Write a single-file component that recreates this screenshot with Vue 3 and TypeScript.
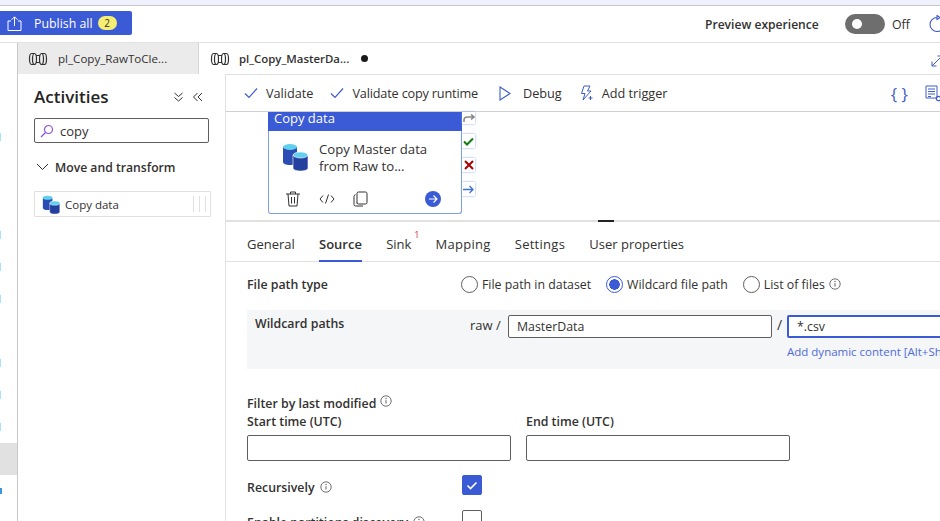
<template>
  <div class="app">
    <!-- shared icons -->
    <svg class="defs" width="0" height="0">
      <defs>
        <symbol id="pipe" viewBox="0 0 20 14">
          <path d="M3.500 1.500h3c1.200 0 2 2.400 2 5.500s-.8 5.500-2 5.500h-3c-1.200 0-2-2.400-2-5.500s.8-5.500 2-5.500zM6.500 1.500c-1.200 0-2 2.400-2 5.500s.8 5.500 2 5.500M8.200 3.500h3.600M8.200 10.500h3.600M13.500 1.500h3c1.200 0 2 2.400 2 5.500s-.8 5.500-2 5.500h-3c-1.200 0-2-2.400-2-5.500s.8-5.500 2-5.500z" fill="none" stroke="#323130" stroke-width="1.200" />
          <path d="M13.500 1.500c1.200 0 2 2.400 2 5.500s-.8 5.500-2 5.500" fill="none" stroke="#323130" stroke-width="1.200" />
        </symbol>
        <symbol id="db" viewBox="0 0 26 28">
          <path d="M1 4v15c0 1.700 3 3 7 3s7-1.300 7-3V4z" fill="#2b4cb3" />
          <ellipse cx="8" cy="4" rx="7" ry="3" fill="#5fd0ee" />
          <path d="M11 12v13c0 1.700 3.200 3 7.500 3s7.500-1.300 7.500-3V12z" fill="#24409f" stroke="#fff" stroke-width=".6" />
          <ellipse cx="18.500" cy="12" rx="7.300" ry="3" fill="#5fd0ee" stroke="#fff" stroke-width=".6" />
        </symbol>
        <symbol id="info" viewBox="0 0 12 12">
          <circle cx="6" cy="6" r="5.200" fill="none" stroke="#605e5c" stroke-width=".9" />
          <path d="M6 5.200v3.300" stroke="#605e5c" stroke-width="1" />
          <circle cx="6" cy="3.500" r=".7" fill="#605e5c" />
        </symbol>
        <symbol id="tick" viewBox="0 0 14 12">
          <path d="M1 6.500l4 4 8-9" fill="none" stroke="#3f5cc8" stroke-width="1.200" />
        </symbol>
      </defs>
    </svg>

    <div class="strip"></div>

    <header class="topbar">
      <button class="publish">
        <svg class="publish-icon" width="15" height="15" viewBox="0 0 15 15">
          <path d="M4 5H1v9.500h13V5h-3M7.500 10V1M4.500 3.800l3-3 3 3" fill="none" stroke="#fff" stroke-width="1" />
        </svg>
        <span>Publish all</span>
        <span class="badge">2</span>
      </button>
      <div class="preview">
        <span class="preview-label">Preview experience</span>
        <span class="toggle"><i></i></span>
        <span class="toggle-state">Off</span>
        <svg class="refresh" width="18" height="18" viewBox="0 0 18 18">
          <path d="M9 2.500A7 7 0 1 0 16 9.500M9 .5v4l3-2z" fill="none" stroke="#3f5cc8" stroke-width="1.100" />
        </svg>
      </div>
    </header>

    <div class="body">
      <nav class="rail">
        <div
          v-for="(slot, index) in railSlots"
          :key="index"
          class="rail-slot"
          :class="{ selected: slot === 'selected', spacer: slot === 'spacer' }"
        >
          <i v-if="slot === 'mark' || slot === 'strong'" class="rail-mark" :class="{ strong: slot === 'strong' }"></i>
        </div>
      </nav>

      <div class="main">
        <div class="tabs">
          <div class="tab">
            <svg width="20" height="14"><use href="#pipe" /></svg>
            <span>pl_Copy_RawToCle...</span>
          </div>
          <div class="tab active">
            <svg width="20" height="14"><use href="#pipe" /></svg>
            <span class="tab-name">pl_Copy_MasterDa...</span>
            <i class="dirty"></i>
          </div>
          <svg class="expand" width="12" height="12" viewBox="0 0 12 12">
            <path d="M1 11L11 1M1 6.500V11h4.500M6.500 1H11v4.500" fill="none" stroke="#3f5cc8" stroke-width="1" />
          </svg>
        </div>

        <div class="below">
          <aside class="activities">
            <div class="act-head">
              <h2>Activities</h2>
              <svg width="11" height="10" viewBox="0 0 11 10">
                <path d="M1.500 1l4 3.500 4-3.500M1.500 5.500l4 3.500 4-3.500" fill="none" stroke="#323130" stroke-width="1" />
              </svg>
              <svg width="11" height="10" viewBox="0 0 11 10">
                <path d="M5.500 1L1.500 5l4 4M10 1L6 5l4 4" fill="none" stroke="#323130" stroke-width="1" />
              </svg>
            </div>
            <div class="search">
              <svg width="14" height="14" viewBox="0 0 14 14">
                <circle cx="8.500" cy="5.500" r="4" fill="none" stroke="#8a4fe0" stroke-width="1.200" />
                <path d="M5.500 8.500L1 13" stroke="#8a4fe0" stroke-width="1.200" />
              </svg>
              <span>copy</span>
            </div>
            <div class="group">
              <svg width="13" height="8" viewBox="0 0 13 8">
                <path d="M1 1l5.500 5.500L12 1" fill="none" stroke="#323130" stroke-width="1" />
              </svg>
              <span>Move and transform</span>
            </div>
            <div class="act-item">
              <svg width="18" height="19"><use href="#db" /></svg>
              <span>Copy data</span>
              <i class="grip"></i>
            </div>
          </aside>

          <section class="workspace">
            <div class="commands">
              <div class="cmd">
                <svg width="14" height="12"><use href="#tick" /></svg>
                <span>Validate</span>
              </div>
              <div class="cmd">
                <svg width="14" height="12"><use href="#tick" /></svg>
                <span class="tight">Validate copy runtime</span>
              </div>
              <div class="cmd debug">
                <svg width="12" height="15" viewBox="0 0 12 15">
                  <path d="M1 1l10 6.500L1 14z" fill="none" stroke="#3f5cc8" stroke-width="1.100" />
                </svg>
                <span>Debug</span>
              </div>
              <div class="cmd">
                <svg width="15" height="16" viewBox="0 0 15 16">
                  <path d="M5 1h6L8.500 6H12l-8 9 2-6.500H2.500zM11.500 11v4M9.500 13h4" fill="none" stroke="#3f5cc8" stroke-width="1" />
                </svg>
                <span>Add trigger</span>
              </div>
              <div class="cmd-right">
                <span class="braces">{ }</span>
                <svg width="17" height="17" viewBox="0 0 17 17">
                  <path d="M1 1h11v12H1zM3 4h7M3 6.500h7M3 9h7M3 11.500h3" fill="none" stroke="#3f5cc8" stroke-width="1" />
                  <circle cx="13.500" cy="13.500" r="2.200" fill="none" stroke="#3f5cc8" stroke-width="1.200" />
                </svg>
              </div>
            </div>

            <div class="canvas">
              <div class="card">
                <div class="card-title">Copy data</div>
                <div class="card-body">
                  <svg width="26" height="28"><use href="#db" /></svg>
                  <p>Copy Master data<br />from Raw to...</p>
                </div>
                <div class="card-actions">
                  <svg width="16" height="16" viewBox="0 0 16 16">
                    <path d="M1 3h14M5.500 3V1h5v2M3 3l1 12h8l1-12M6.500 6v6.500M9.500 6v6.500" fill="none" stroke="#323130" stroke-width="1" />
                  </svg>
                  <svg width="16" height="10" viewBox="0 0 16 10">
                    <path d="M4 1.500L1 5l3 3.500M12 1.500L15 5l-3 3.500M9.500 .5L6.500 9.500" fill="none" stroke="#323130" stroke-width="1" />
                  </svg>
                  <svg width="15" height="16" viewBox="0 0 15 16">
                    <path d="M4 12.500V2.500q0-1.500 1.500-1.500h7q1.500 0 1.500 1.500v9q0 1.500-1.500 1.500h-7Q4 13 4 11.500M2.500 3.500Q1 4 1 5.500v8q0 1.500 1.500 1.500H10" fill="none" stroke="#323130" stroke-width="1" />
                  </svg>
                  <span class="go">
                    <svg width="10" height="10" viewBox="0 0 10 10">
                      <path d="M1 5h8M5.500 1.500L9 5 5.500 8.500" fill="none" stroke="#fff" stroke-width="1.200" />
                    </svg>
                  </span>
                </div>
              </div>
              <div class="ports">
                <span class="port skip">
                  <svg width="12" height="9" viewBox="0 0 12 9">
                    <path d="M1 8V6q0-3 3.500-3H11M8 .5L11 3 8 5.500" fill="none" stroke="#8a8886" stroke-width="1.600" />
                  </svg>
                </span>
                <span class="port">
                  <svg width="11" height="9" viewBox="0 0 11 9">
                    <path d="M1 4.500l3 3 6-6" fill="none" stroke="#107c10" stroke-width="2" />
                  </svg>
                </span>
                <span class="port">
                  <svg width="10" height="10" viewBox="0 0 10 10">
                    <path d="M1 1l8 8M9 1L1 9" fill="none" stroke="#a80000" stroke-width="2" />
                  </svg>
                </span>
                <span class="port">
                  <svg width="11" height="9" viewBox="0 0 11 9">
                    <path d="M0 4.500h10M6.500 1L10 4.500 6.500 8" fill="none" stroke="#3f6fd8" stroke-width="1.300" />
                  </svg>
                </span>
              </div>
            </div>

            <div class="splitter"><i></i></div>

            <div class="panel-tabs">
              <span
                v-for="tab in panelTabs"
                :key="tab"
                class="panel-tab"
                :class="{ current: tab === 'Source', wide: tab === 'Mapping' || tab === 'Settings' }"
              >
                {{ tab }}<sup v-if="tab === 'Sink'">1</sup>
              </span>
            </div>

            <div class="form">
              <div class="row path-type">
                <label class="label">File path type</label>
                <div class="radios">
                  <span v-for="opt in pathTypes" :key="opt" class="radio" :class="{ on: opt === 'Wildcard file path' }">
                    <i></i>{{ opt }}
                    <svg v-if="opt === 'List of files'" width="12" height="12"><use href="#info" /></svg>
                  </span>
                </div>
              </div>

              <div class="wildcard">
                <label class="label wild-label">Wildcard paths</label>
                <span class="raw">raw /</span>
                <div class="field folder">MasterData</div>
                <span class="slash">/</span>
                <div class="file-col">
                  <div class="field file">*.csv</div>
                  <a class="dynamic">Add dynamic content [Alt+Shift+D]</a>
                </div>
              </div>

              <div class="filter">
                <div class="filter-title">
                  Filter by last modified
                  <svg width="12" height="12"><use href="#info" /></svg>
                </div>
                <div class="times">
                  <div v-for="t in timeFields" :key="t" class="time">
                    <label>{{ t }}</label>
                    <div class="field"></div>
                  </div>
                </div>
              </div>

              <div class="row check-row">
                <span class="label plain">Recursively <svg width="12" height="12"><use href="#info" /></svg></span>
                <span class="check on">
                  <svg width="12" height="9" viewBox="0 0 12 9">
                    <path d="M1.500 4.500l3 3 6-6" fill="none" stroke="#fff" stroke-width="1.600" />
                  </svg>
                </span>
              </div>
              <div class="row check-row second">
                <span class="label plain">Enable partitions discovery <svg width="12" height="12"><use href="#info" /></svg></span>
                <span class="check"></span>
              </div>
            </div>
          </section>
        </div>
      </div>
    </div>
  </div>
</template>

<script setup lang="ts">
type RailSlot = 'mark' | 'strong' | 'empty' | 'selected' | 'spacer'

const railSlots: RailSlot[] = [
  'mark', 'empty', 'empty', 'spacer',
  'mark', 'mark', 'mark', 'empty',
  'mark', 'mark', 'mark', 'selected', 'strong'
]

const panelTabs = ['General', 'Source', 'Sink', 'Mapping', 'Settings', 'User properties']
const pathTypes = ['File path in dataset', 'Wildcard file path', 'List of files']
const timeFields = ['Start time (UTC)', 'End time (UTC)']
</script>

<style>
html, body {
  margin: 0;
  background: #fff;
}
</style>

<style scoped>
.app {
  width: 940px;
  height: 521px;
  overflow: hidden;
  display: flex;
  flex-direction: column;
  font-family: "Open Sans", "Noto Sans", sans-serif;
  font-size: 12.35px;
  color: #323130;
  background: #fff;
}

.defs {
  position: absolute;
}

svg {
  flex-shrink: 0;
}

.strip {
  height: 5px;
  flex-shrink: 0;
  background: #eff2fc;
  border-bottom: 1px solid #c8c8c8;
}

/* top bar */
.topbar {
  width: 946px;
  height: 37px;
  flex-shrink: 0;
  box-sizing: border-box;
  display: flex;
  align-items: center;
  justify-content: space-between;
  border-bottom: 1px solid #e1e1e1;
}

.publish {
  width: 132px;
  height: 24px;
  margin-top: -2px;
  border: 0;
  padding: 0 0 0 7px;
  display: flex;
  align-items: center;
  background: #3a5ad6;
  color: #fff;
  font: inherit;
  border-radius: 0 2px 2px 0;
}

.publish-icon {
  margin-right: 12px;
}

.badge {
  width: 19px;
  height: 14px;
  margin-left: 5px;
  border-radius: 7px;
  background: #f5ee73;
  color: #323130;
  font-size: 10px;
  line-height: 14px;
  text-align: center;
}

.preview {
  display: flex;
  align-items: center;
}

.preview-label {
  font-weight: 600;
  font-size: 12.1px;
  width: 140px;
}

.toggle {
  width: 40px;
  height: 20px;
  border-radius: 10px;
  background: #6e6e6e;
  display: flex;
  align-items: center;
  padding-left: 7px;
  box-sizing: border-box;
}

.toggle i {
  width: 10px;
  height: 10px;
  border-radius: 50%;
  background: #fff;
}

.toggle-state {
  margin-left: 7px;
  width: 36px;
}

/* body */
.body {
  flex: 1;
  min-height: 0;
  display: flex;
}

.rail {
  width: 17px;
  flex-shrink: 0;
  padding-top: 78px;
  border-right: 1px solid #c8c8c8;
  display: flex;
  flex-direction: column;
}

.rail-slot {
  height: 32px;
  flex-shrink: 0;
  display: flex;
  align-items: center;
}

.rail-slot.spacer {
  height: 2px;
}

.rail-slot.selected {
  background: #e1e1e1;
}

.rail-mark {
  width: 1px;
  height: 8px;
  background: #a8e3fa;
}

.rail-mark.strong {
  width: 2px;
  height: 6px;
  background: #3a96dd;
}

.main {
  flex: 1;
  min-width: 0;
  display: flex;
  flex-direction: column;
}

/* editor tabs */
.tabs {
  height: 31px;
  flex-shrink: 0;
  display: flex;
  font-size: 11.6px;
}

.tab {
  width: 181px;
  flex-shrink: 0;
  box-sizing: border-box;
  display: flex;
  align-items: center;
  gap: 10px;
  padding: 0 0 0 10px;
  background: #ebebeb;
  border-right: 1px solid #d6d6d6;
}

.tab.active {
  width: 180px;
  background: #fff;
  border-right: 0;
  padding-left: 11px;
  gap: 9px;
}

.tab-name {
  font-weight: 600;
  font-size: 11.4px;
}

.dirty {
  width: 7px;
  height: 7px;
  margin-left: 3px;
  border-radius: 50%;
  background: #1b1a19;
}

.expand {
  margin: 12px 0 0 552px;
}

.below {
  flex: 1;
  min-height: 0;
  display: flex;
}

/* activities */
.activities {
  width: 208px;
  flex-shrink: 0;
  box-sizing: border-box;
  padding: 0 14px 0 16px;
  border-right: 1px solid #e1e1e1;
}

.act-head {
  height: 43px;
  display: flex;
  align-items: center;
  margin-top: 1px;
  padding-right: 8px;
}

.act-head h2 {
  margin: 0 auto 0 0;
  font-size: 17px;
  font-weight: 600;
  color: #252423;
}

.act-head svg + svg {
  margin-left: 8px;
}

.search {
  height: 25px;
  margin-right: 2px;
  box-sizing: border-box;
  display: flex;
  align-items: center;
  gap: 6px;
  padding-left: 5px;
  border: 1px solid #605e5c;
  border-radius: 2px;
  font-size: 13px;
}

.group {
  margin-top: 14px;
  height: 20px;
  display: flex;
  align-items: center;
  gap: 6px;
  padding-left: 2px;
  font-weight: 600;
  font-size: 12.2px;
}

.act-item {
  margin-top: 14px;
  height: 26px;
  box-sizing: border-box;
  display: flex;
  align-items: center;
  gap: 5px;
  padding: 0 4px 0 7px;
  border: 1px solid #e1e1e1;
  font-size: 11.500px;
}

.grip {
  width: 11px;
  height: 16px;
  margin-left: auto;
  border-left: 1px solid #e1e1e1;
  border-right: 1px solid #e1e1e1;
  background: linear-gradient(#e1e1e1, #e1e1e1) center / 1px 100% no-repeat;
}

/* workspace */
.workspace {
  width: 730px;
  flex-shrink: 0;
  display: flex;
  flex-direction: column;
  min-height: 0;
}

.commands {
  height: 38px;
  flex-shrink: 0;
  box-sizing: border-box;
  display: flex;
  align-items: center;
  padding-left: 18px;
  gap: 17px;
  border-top: 1px solid #e1e1e1;
  border-bottom: 1px solid #d0d0d0;
  font-size: 12.7px;
}

.cmd {
  display: flex;
  align-items: center;
  gap: 8px;
}

.cmd .tight {
  letter-spacing: -.18px;
}

.cmd.debug {
  margin-left: 4px;
  gap: 12px;
}

.cmd-right {
  margin-left: auto;
  margin-right: 14px;
  display: flex;
  align-items: center;
  gap: 17px;
}

.braces {
  color: #3f5cc8;
  font-size: 17px;
  line-height: 1;
}

.canvas {
  height: 108px;
  flex-shrink: 0;
  padding-left: 42px;
  display: flex;
}

.card {
  width: 194px;
  height: 102px;
  box-sizing: border-box;
  border: 1px solid #7f9ee8;
  border-top: 0;
  border-radius: 0 0 3px 3px;
  display: flex;
  flex-direction: column;
}

.card-title {
  height: 19px;
  flex-shrink: 0;
  margin: 0 -1px;
  padding-left: 6px;
  background: #3a5ad6;
  color: #fff;
  font-size: 13px;
  line-height: 13px;
}

.card-body {
  display: flex;
  gap: 11px;
  padding: 12px 0 0 13px;
}

.card-body p {
  margin: -2px 0 0;
  font-size: 13.200px;
  line-height: 17px;
}

.card-actions {
  margin-top: auto;
  padding: 0 20px 6px 16px;
  display: flex;
  align-items: center;
  gap: 18px;
}

.go {
  width: 16px;
  height: 16px;
  margin-left: auto;
  border-radius: 50%;
  background: #3a5ad6;
  display: flex;
  align-items: center;
  justify-content: center;
}

.ports {
  display: flex;
  flex-direction: column;
  gap: 10px;
}

.port {
  width: 13px;
  height: 14px;
  background: #fff;
  box-shadow: 0 0 2px #7f9ee8;
  display: flex;
  align-items: center;
  justify-content: center;
}

.port.skip {
  height: 12px;
}

.splitter {
  height: 2px;
  flex-shrink: 0;
  background: #e1e1e1;
}

.splitter i {
  display: block;
  width: 16px;
  height: 2px;
  margin-left: 372px;
  background: #252423;
}

/* bottom panel */
.panel-tabs {
  height: 40px;
  flex-shrink: 0;
  box-sizing: border-box;
  display: flex;
  padding-left: 21px;
  gap: 24.2px;
  border-bottom: 1px solid #e1e1e1;
  font-size: 13px;
}

.panel-tab {
  height: 40px;
  box-sizing: border-box;
  line-height: 44px;
  position: relative;
}

.panel-tab.wide {
  letter-spacing: .27px;
}

.panel-tab.current {
  font-weight: 600;
  border-bottom: 2px solid #3a5ad6;
}

.panel-tab sup {
  position: absolute;
  top: -9px;
  right: -8px;
  font-size: 9px;
  color: #d13438;
}

.form {
  padding-left: 21px;
}

.row {
  display: flex;
  align-items: center;
}

.label {
  width: 215px;
  flex-shrink: 0;
  font-weight: 600;
}

.label.plain {
  display: flex;
  align-items: center;
  gap: 5px;
  padding-top: 4px;
}

.path-type {
  height: 44px;
  margin-bottom: 4px;
}

.path-type .label {
  width: 214px;
}

.radios {
  display: flex;
  gap: 15px;
}

.radio {
  display: flex;
  align-items: center;
  gap: 4px;
}

.radio i {
  width: 17px;
  height: 17px;
  box-sizing: border-box;
  border: 1px solid #605e5c;
  border-radius: 50%;
}

.radio.on i {
  border-color: #3a5ad6;
  background: radial-gradient(circle, #3a5ad6 0 5px, #fff 5.500px);
}

.wildcard {
  height: 59px;
  display: flex;
  padding: 5px 0 0 8px;
  background: #f5f6f8;
  box-sizing: border-box;
}

.raw {
  width: 38px;
  flex-shrink: 0;
  padding-top: 1px;
  font-size: 13px;
}

.slash {
  width: 15px;
  flex-shrink: 0;
  text-align: center;
  font-size: 14px;
}

.field {
  box-sizing: border-box;
  height: 26px;
  background: #fff;
  border: 1px solid #605e5c;
  border-radius: 2px;
  padding-left: 8px;
  line-height: 24px;
}

.folder {
  width: 264px;
  height: 23px;
  line-height: 21px;
  flex-shrink: 0;
}

.file-col {
  width: 190px;
  flex-shrink: 0;
}

.file {
  height: 23px;
  line-height: 19px;
  border: 2px solid #3a5ad6;
}

.dynamic {
  display: block;
  margin-top: 6px;
  font-size: 11.500px;
  color: #4f6bd8;
  white-space: nowrap;
}

.filter {
  margin-top: 26px;
}

.filter-title {
  display: flex;
  align-items: center;
  gap: 4px;
  font-weight: 600;
  height: 16px;
}

.filter-title svg {
  margin-top: -4px;
}

.times {
  display: flex;
  gap: 15px;
  margin-top: 3px;
}

.time {
  width: 264px;
}

.time label {
  display: block;
  font-weight: 600;
  height: 15px;
  line-height: 15px;
  margin-bottom: 6px;
}

.check-row {
  margin-top: 14px;
  height: 20px;
}

.check-row.second {
  margin-top: 15px;
}

.check {
  width: 20px;
  height: 20px;
  flex-shrink: 0;
  box-sizing: border-box;
  border: 1px solid #605e5c;
  border-radius: 2px;
  display: flex;
  align-items: center;
  justify-content: center;
}

.check.on {
  background: #3a5ad6;
  border-color: #3a5ad6;
}
</style>
